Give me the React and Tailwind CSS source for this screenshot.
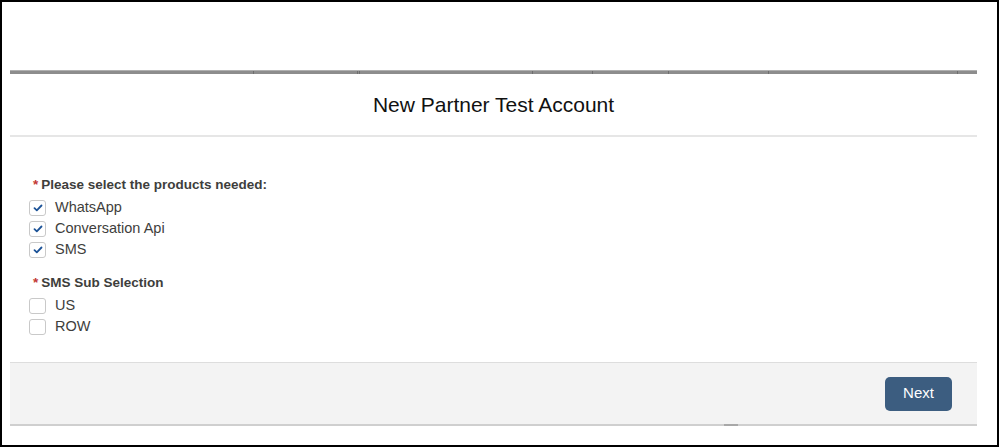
import React from "react";
import { useState } from "react";

const ticks = [244, 104, 2, 173, 60, 76, 100, 189, 19];

const Check = ({ label, checked, onToggle }) => (
  <label className="flex items-center h-[21px] cursor-pointer">
    <span
      onClick={onToggle}
      className="w-[17px] h-[16px] ml-[19px] mr-[9px] rounded-[3px] border border-[#c9c9c9] bg-white flex items-center justify-center"
    >
      {checked && (
        <svg width="10" height="8" viewBox="0 0 10 8">
          <path
            d="M1.5 4.2 L3.8 6.3 L8.5 1.5"
            fill="none"
            stroke="#1b5297"
            strokeWidth="1.8"
            strokeLinecap="round"
            strokeLinejoin="round"
          />
        </svg>
      )}
    </span>
    <span className="text-[14.5px] text-[#3e3e3c]">{label}</span>
  </label>
);

const Group = ({ title, options, values, setValues }) => (
  <div>
    <div className="flex items-center h-[18px] ml-[23px] text-[13.5px] font-bold text-[#3e3e3c]">
      <span className="text-[#c23934] mr-[3px]">*</span>
      {title}
    </div>
    <div className="mt-[3px]">
      {options.map((o) => (
        <Check
          key={o}
          label={o}
          checked={values[o]}
          onToggle={() => setValues({ ...values, [o]: !values[o] })}
        />
      ))}
    </div>
  </div>
);

const App = () => {
  const [products, setProducts] = useState({
    WhatsApp: true,
    "Conversation Api": true,
    SMS: true,
  });
  const [sub, setSub] = useState({ US: false, ROW: false });

  return (
    <div
      className="w-[999px] h-[447px] border-2 border-black bg-white pl-[8px] pr-[20px] pt-[68px]"
      style={{ fontFamily: '"Liberation Sans", Arial, sans-serif' }}
    >
      <div className="flex h-[4px] bg-[#8d8d8d] border-t border-[#b0b0b0]">
        {ticks.map((w, i) => (
          <div
            key={i}
            className="h-full border-r border-[#6e6e6e] last:border-r-0"
            style={{ width: w }}
          />
        ))}
      </div>

      <h1 className="mt-[19px] h-[24px] leading-[24px] text-center text-[21px] text-[#111]">
        New Partner Test Account
      </h1>

      <div className="mt-[18px] h-[2px] bg-[#e6e6e6]" />

      <div className="pt-[39px] h-[225px]">
        <Group
          title="Please select the products needed:"
          options={["WhatsApp", "Conversation Api", "SMS"]}
          values={products}
          setValues={setProducts}
        />
        <div className="mt-[14px]">
          <Group
            title="SMS Sub Selection"
            options={["US", "ROW"]}
            values={sub}
            setValues={setSub}
          />
        </div>
      </div>

      <div className="h-[62px] bg-[#f3f3f3] border-t border-[#dddddd] flex items-center justify-end pr-[25px]">
        <button className="w-[67px] h-[34px] rounded-[5px] bg-[#3c5d80] text-white text-[15px] font-medium">
          Next
        </button>
      </div>
      <div className="flex h-[2px] bg-[#cfcfcf]">
        <div className="w-[714px]" />
        <div className="w-[14px] bg-[#a8a8a8]" />
      </div>
    </div>
  );
};

export default App;
